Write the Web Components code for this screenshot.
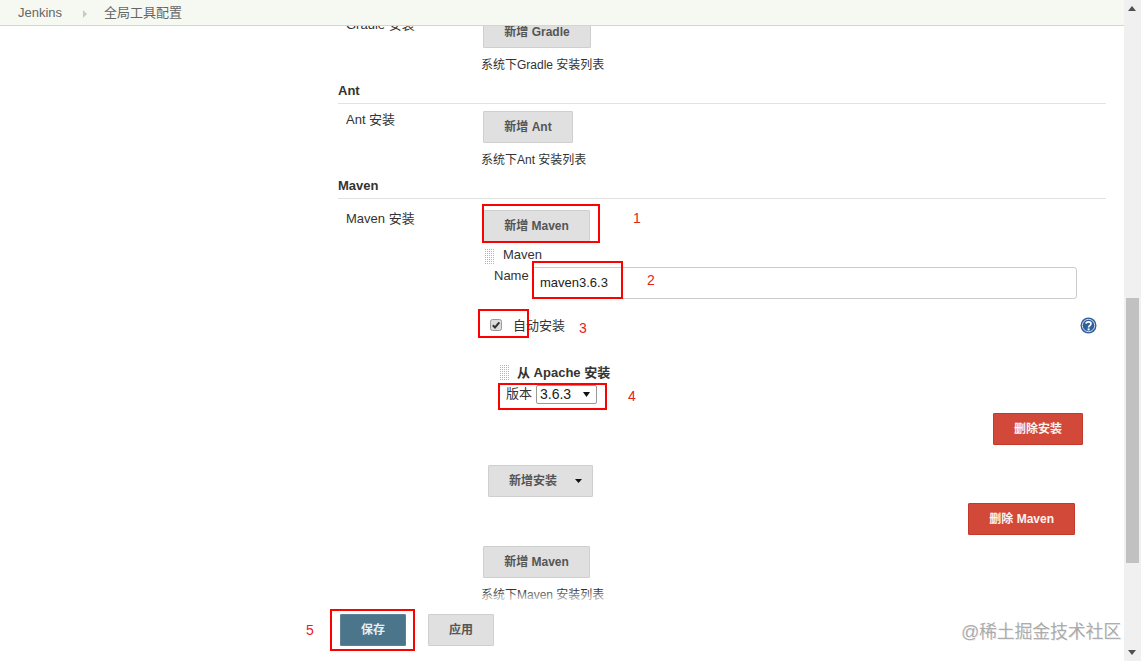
<!DOCTYPE html>
<html lang="zh"><head><meta charset="utf-8"><title>全局工具配置</title>
<style>
html,body{margin:0;padding:0;height:100%;overflow:hidden;background:#fff}
body{font:13px/16px "Liberation Sans","Noto Sans CJK SC",sans-serif;color:#333}
</style></head><body>
<jk-page>
  <jk-header slot="header"><span>Jenkins</span><i></i><span>全局工具配置</span></jk-header>

  <jk-row label="Gradle 安装" style="--drop:0px">
    <jk-btn style="--w:108px">新增 Gradle</jk-btn>
    <jk-note>系统下Gradle 安装列表</jk-note>
  </jk-row>
  <jk-heading>Ant</jk-heading>
  <jk-row label="Ant 安装" style="--drop:7px">
    <jk-btn style="--w:90px">新增 Ant</jk-btn>
    <jk-note>系统下Ant 安装列表</jk-note>
  </jk-row>
  <jk-heading>Maven</jk-heading>
  <jk-row label="Maven 安装" style="--drop:11px">
    <jk-btn style="--h:32px;--w:107px">新增 Maven</jk-btn>
    <jk-maven>
      <jk-handle slot="handle" style="margin-top:3px"></jk-handle>
    </jk-maven>
    <jk-btn style="--w:107px;margin-top:4px">新增 Maven</jk-btn>
    <jk-note>系统下Maven 安装列表</jk-note>
  </jk-row>

  <jk-savebar slot="footer">
    <jk-btn kind="primary" style="--w:66px">保存</jk-btn>
    <jk-btn style="--w:66px">应用</jk-btn>
  </jk-savebar>

  <jk-mark slot="over" x="482" y="204" w="118" h="39" n="1" nx="633" ny="210"></jk-mark>
  <jk-mark slot="over" x="532" y="261" w="91" h="38" n="2" nx="647" ny="272"></jk-mark>
  <jk-mark slot="over" x="478" y="309" w="51" h="29" n="3" nx="579" ny="320"></jk-mark>
  <jk-mark slot="over" x="498" y="383" w="109" h="27" n="4" nx="628" ny="388"></jk-mark>
  <jk-mark slot="over" x="330" y="609" w="85" h="42" n="5" nx="306" ny="622"></jk-mark>
  <jk-water slot="over">@稀土掘金技术社区</jk-water>
</jk-page>

<script>
function def(name, css, html){
  customElements.define(name, class extends HTMLElement{
    connectedCallback(){
      const r=this.shadowRoot||this.attachShadow({mode:'open'});
      r.innerHTML='<style>'+css+'</style>'+(typeof html==='function'?html(this):html);
    }
  });
}
def('jk-page',`
  :host{display:grid;grid-template-columns:1124px 17px;width:1141px;height:661px;position:relative;overflow:hidden;background:#fff}
  .main{padding:16px 18px 0 338px;min-width:0;overflow:hidden}
  .bar{background:#f0f0f0;display:flex;flex-direction:column;height:661px}
  .thumb{width:13px;height:265px;margin:287px 0 0 2px;background:#c1c1c1}
  .up{margin:6px 0 0 4px;width:0;height:0;border:4.5px solid transparent;border-bottom:5px solid #505050;border-top:0}
  .arrow{margin:auto 0 6px 4px;width:0;height:0;border:4.5px solid transparent;border-top:5px solid #505050;border-bottom:0}
`,`<div class="main"><slot></slot></div><div class="bar"><div class="up"></div><div class="thumb"></div><div class="arrow"></div></div>
<slot name="header"></slot><slot name="footer"></slot><slot name="over"></slot>`);

def('jk-header',`
  :host{position:absolute;left:0;top:0;height:24px;padding-top:1px;background:#f6f8f2;border-bottom:1px solid #d3d7cf;
    display:flex;align-items:center;padding-left:18px;width:1106px;color:#666;font-size:13px}
  ::slotted(i){width:0;height:0;margin:1px 17px 0 21px;border:4px solid transparent;border-left:4px solid #c8cac4;border-right:0}
`,`<slot></slot>`);

def('jk-heading',`
  :host{display:block;margin-top:10px;padding-bottom:4px;border-bottom:1px solid #e2e2e2;font-weight:bold;line-height:16px;color:#333}
`,`<slot></slot>`);

def('jk-row',`
  :host{display:flex;padding-top:var(--drop,0)}
  .l{width:137px;padding:1px 0 0 8px;flex:none;line-height:16px;color:#333}
  .f{flex:1;min-width:0}
`,h=>`<div class="l">${h.getAttribute('label')}</div><div class="f"><slot></slot></div>`);

def('jk-btn',`
  :host{display:flex;align-items:center;justify-content:center;box-sizing:border-box;height:var(--h,32px);width:var(--w,fit-content);padding:0 20px;
    font-weight:bold;font-size:12px;color:#555;background:#e0e0e0;border:1px solid #cfcfcf;border-radius:1px;white-space:nowrap}
  :host([kind=primary]){background:#4b758b;border-color:#5c8297;color:#e9eef1;padding:0}
  :host([kind=danger]){background:#d24939;border-color:#c4392b;color:#fdf3f1}
`,`<slot></slot>`);

def('jk-note',`
  :host{display:block;margin:9px 0 0 -2px;font-size:12px;line-height:16px;color:#333}
`,`<slot></slot>`);

def('jk-handle',`
  :host{display:block;flex:none;width:11px;height:17px;background:linear-gradient(90deg,#fff 1px,transparent 1px) 0 0/2px 2px,linear-gradient(#fff 1px,#b4b4b4 1px) 0 0/2px 2px}
`,``);

def('jk-maven',`
  :host{display:block;height:300px;color:#333;padding-top:.02px}
  .title{display:flex;gap:8px;margin:4px 0 0 1px;height:17px;align-items:center}
  .name{display:flex;margin:4px 0 0 11px;align-items:flex-start}
  .name span{width:38px;line-height:16px;padding-top:1px}
  .input{box-sizing:border-box;width:545px;height:32px;border:1px solid #ccc;border-radius:3px;background:#fff;display:flex;align-items:center;padding-left:7px;color:#222;font-size:13px}
  .check{display:flex;align-items:center;margin:18px 9px 0 7px;height:16px}
  .check b{font-weight:normal;margin-left:11px;padding-top:2px}
  .box{width:12px;height:12px}
  .help{margin-left:auto;width:17px;height:17px}
  .ap{margin:31px 0 0 16px}
  .ap .t{display:flex;gap:7px;align-items:center;font-weight:bold;height:17px;color:#333}
  .ver{display:flex;align-items:center;margin:3px 0 0 7px;height:20px}
  .sel{box-sizing:border-box;width:61px;height:19px;margin-left:4px;border:1px solid #999;border-radius:2px;display:flex;align-items:center;justify-content:space-between;padding:0 6px 0 3px;font-size:14px;color:#222}
  .sel svg{width:7px;height:5px}
  .del{display:flex;justify-content:flex-end;margin-top:9px;padding-right:23px}
  .add{margin:20px 0 0 5px;width:105px}
  .add-in{display:flex;align-items:center;box-sizing:border-box;width:105px;height:32px;background:#e0e0e0;border:1px solid #cfcfcf;border-radius:1px;font-size:12px;font-weight:bold;color:#555;padding-left:20px}
  .add-in svg{width:7px;height:4px;margin-left:18px}
  .del2{display:flex;justify-content:flex-end;margin-top:6px;padding-right:31px}
`,`<div class="title"><slot name="handle"></slot><span>Maven</span></div>
<div class="name"><span>Name</span><div class="input">maven3.6.3</div></div>
<div class="check">
  <svg class="box" viewBox="0 0 12 12"><rect x=".5" y=".5" width="11" height="11" rx="2" fill="#dcdcdc" stroke="#9a9a9a"/><path d="M2.8 6.2 5 8.5 9.3 3.3" fill="none" stroke="#333" stroke-width="2"/></svg>
  <b>自动安装</b>
  <svg class="help" viewBox="0 0 17 17"><circle cx="8.5" cy="8.5" r="8" fill="#2f5f9b"/><circle cx="8.5" cy="8.5" r="6.2" fill="none" stroke="#cfdcec" stroke-width="1"/><path d="M6 6.6C6.2 4.2 11 4.2 11 6.8 11 8.6 8.6 8.6 8.6 10.4" fill="none" stroke="#fff" stroke-width="1.7"/><rect x="7.6" y="11.4" width="2" height="2" fill="#fff"/></svg>
</div>
<div class="ap">
  <div class="t"><jk-handle></jk-handle><span>从 Apache 安装</span></div>
  <div class="ver"><span>版本</span><div class="sel"><span>3.6.3</span><svg viewBox="0 0 7 5"><path d="M0 0H7L3.5 5Z" fill="#111"/></svg></div></div>
  <div class="del"><jk-btn kind="danger">删除安装</jk-btn></div>
</div>
<div class="add"><div class="add-in"><span>新增安装</span><svg viewBox="0 0 7 4"><path d="M0 0H7L3.5 4Z" fill="#111"/></svg></div></div>
<div class="del2"><jk-btn kind="danger">删除 Maven</jk-btn></div>`);

def('jk-savebar',`
  :host{position:absolute;left:0;bottom:0;width:1124px;height:71px;box-sizing:border-box;padding:24px 0 0 340px;display:flex;gap:22px;align-items:flex-start;
    background:linear-gradient(rgba(255,255,255,0) 0,#fff 14px)}
`,`<slot></slot>`);

def('jk-mark',`
  :host{position:static}
  .b{position:absolute;box-sizing:border-box;border:2px solid #f00}
  .n{position:absolute;color:#e4231b;font-size:14px;line-height:16px}
`,h=>{const a=k=>h.getAttribute(k);
  return `<div class="b" style="left:${a('x')}px;top:${a('y')}px;width:${a('w')}px;height:${a('h')}px"></div><div class="n" style="left:${a('nx')}px;top:${a('ny')}px">${a('n')}</div>`});

def('jk-water',`
  :host{position:absolute;left:961px;top:621px;font-size:18px;line-height:22px;color:rgba(120,120,120,.62);white-space:nowrap;letter-spacing:-.25px;text-shadow:1px 1px 0 rgba(0,0,0,.08)}
`,`<slot></slot>`);
</script>
</body></html>
